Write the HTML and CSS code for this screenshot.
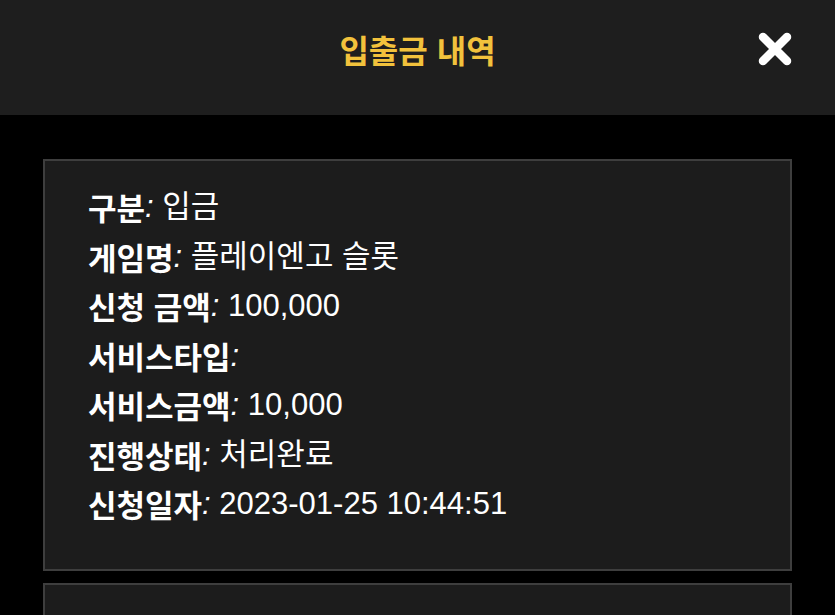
FILE: index.html
```html
<!DOCTYPE html>
<html lang="ko">
<head>
<meta charset="utf-8">
<link rel="stylesheet" href="styles.css">
</head>
<body>
<header class="top">
  <h1 class="title">입출금 내역</h1>
  <button class="close" aria-label="닫기">
    <svg width="38" height="36" viewBox="0 0 38 36"><path d="M7 6 L31 30 M31 6 L7 30" stroke="#fff" stroke-width="8.5" stroke-linecap="round"/></svg>
  </button>
</header>
<main class="list">
  <section class="card">
    <p class="row"><b>구분</b><i>: </i>입금</p>
    <p class="row"><b>게임명</b><i>: </i>플레이엔고 슬롯</p>
    <p class="row"><b>신청 금액</b><i>: </i>100,000</p>
    <p class="row"><b>서비스타입</b><i>: </i></p>
    <p class="row"><b>서비스금액</b><i>: </i>10,000</p>
    <p class="row"><b>진행상태</b><i>: </i>처리완료</p>
    <p class="row"><b>신청일자</b><i>: </i>2023-01-25 10:44:51</p>
  </section>
  <section class="card"></section>
</main>
</body>
</html>
```
FILE: styles.css
```css
html, body {
  margin: 0;
  padding: 0;
  background: #000;
  font-family: "Liberation Sans", "Noto Sans CJK KR", sans-serif;
  color: #fff;
}
.top {
  height: 115px;
  background: #1e1e1e;
  display: flex;
  align-items: center;
  justify-content: center;
  position: relative;
}
.title {
  margin: 0;
  font-size: 32px;
  font-weight: 700;
  color: #f2c23c;
  font-family: "Noto Sans CJK KR", sans-serif;
  transform: translateY(-9px);
}
.close {
  position: absolute;
  right: 41px;
  top: 31px;
  background: none;
  border: 0;
  padding: 0;
  width: 38px;
  height: 36px;
}
.list {
  padding: 44px 43px 0 43px;
  display: flex;
  flex-direction: column;
  gap: 12px;
}
.card {
  background: #1c1c1c;
  border: 2px solid #3e3e3e;
  padding: 21px 43px 40px;
  min-height: 80px;
}
.row {
  margin: 0;
  font-size: 31px;
  height: 49.5px;
  line-height: 49.5px;
  white-space: nowrap;
  display: flex;
  align-items: center;
}
.row b {
  font-family: "Noto Sans CJK KR", sans-serif;
  font-weight: 700;
}
.row i {
  font-style: italic;
  font-weight: 400;
  white-space: pre;
}
```
